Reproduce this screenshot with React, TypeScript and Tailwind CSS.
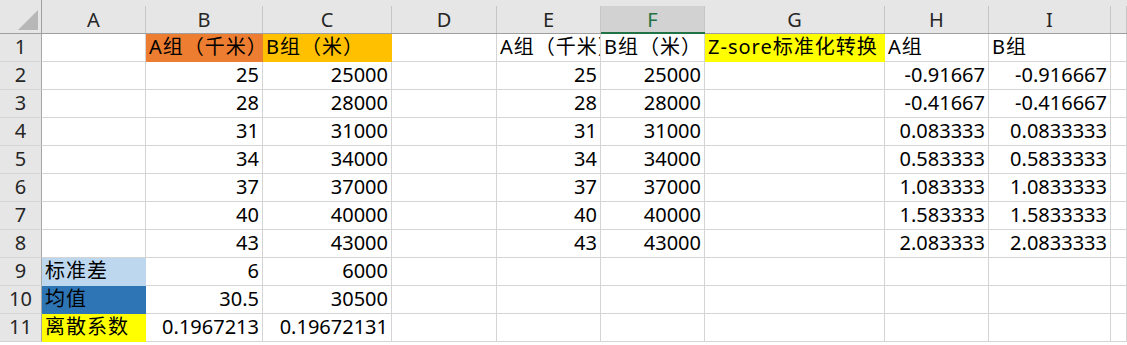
import React from "react";

type Cell = { t?: string; r?: boolean; bg?: string };

const GRID =
  "grid grid-cols-[42px_104px_117px_129px_105px_104px_104px_180px_104px_122px_1fr]";

const letters = ["A", "B", "C", "D", "E", "F", "G", "H", "I", ""];

const L = (t: string, bg?: string): Cell => ({ t, bg });
const N = (t: string): Cell => ({ t, r: true });
const E: Cell = {};

const ORANGE = "bg-[#ed7d31] border-[#ed7d31]";
const GOLD = "bg-[#ffc000] border-[#ffc000]";
const YELLOW = "bg-[#ffff00] border-[#ffff00]";
const LBLUE = "bg-[#bdd7ee] border-[#bdd7ee]";
const BLUE = "bg-[#2e75b6] border-[#2e75b6]";

const aVals = ["25", "28", "31", "34", "37", "40", "43"];
const bVals = ["25000", "28000", "31000", "34000", "37000", "40000", "43000"];
const hVals = ["-0.91667", "-0.41667", "0.083333", "0.583333", "1.083333", "1.583333", "2.083333"];
const iVals = ["-0.916667", "-0.416667", "0.0833333", "0.5833333", "1.0833333", "1.5833333", "2.0833333"];

const rows: Cell[][] = [
  [E, L("A组（千米）", ORANGE), L("B组（米）", GOLD), E, L("A组（千米）"), L("B组（米）"), L("Z-sore标准化转换", YELLOW), L("A组"), L("B组"), E],
  ...aVals.map((a, i) => [E, N(a), N(bVals[i]), E, N(a), N(bVals[i]), E, N(hVals[i]), N(iVals[i]), E]),
  [L("标准差", LBLUE), N("6"), N("6000"), E, E, E, E, E, E, E],
  [L("均值", BLUE), N("30.5"), N("30500"), E, E, E, E, E, E, E],
  [L("离散系数", YELLOW), N("0.1967213"), N("0.19672131"), E, E, E, E, E, E, E],
];

function HeaderCell({ label, selected }: { label: string; selected?: boolean }) {
  return (
    <div className="flex flex-col h-[34px]">
      <div className="h-[6px]" />
      <div
        className={
          selected
            ? "flex flex-1 bg-[#d2d2d2] border-b-2 border-[#217346]"
            : "flex flex-1 border-b border-[#9f9f9f]"
        }
      >
        <div
          className={
            selected
              ? "flex-1 flex items-end justify-center pb-[0px] text-[20px] leading-[24px] text-[#217346]"
              : "flex-1 flex items-end justify-center pb-[1px] text-[20px] leading-[24px] text-[#262626]"
          }
        >
          {label}
        </div>
        <div className="w-px bg-[#c6c6c6]" />
      </div>
    </div>
  );
}

function DataCell({ c }: { c: Cell }) {
  const border = c.bg ? c.bg : "border-[#d4d4d4]";
  return (
    <div
      className={`h-[28px] border-r border-b ${border} overflow-hidden whitespace-nowrap flex items-end pb-[1px] text-[20px] leading-[26px] text-black ${
        c.r ? "justify-end pr-[3px]" : "justify-start pl-[3px] tracking-[1px]"
      }`}
    >
      {c.t}
    </div>
  );
}

export default function App() {
  return (
    <div className="w-[1127px] h-[345px] bg-white overflow-hidden font-['Noto_Sans','Noto_Sans_CJK_SC',sans-serif]">
      <div className={`${GRID} bg-[#e6e6e6]`}>
        <div className="h-[34px] flex items-end justify-end pr-[3px] pb-[3px] border-r border-b border-[#9f9f9f]">
          <svg width="20" height="20" viewBox="0 0 20 20">
            <polygon points="0,20 20,20 20,0" fill="#b7b7b7" />
          </svg>
        </div>
        {letters.map((l, i) => (
          <HeaderCell key={i} label={l} selected={l === "F"} />
        ))}
      </div>
      {rows.map((row, ri) => (
        <div key={ri} className={GRID}>
          <div className="h-[28px] bg-[#e6e6e6] border-r border-[#a6a6a6] border-b border-b-[#d4d4d4] flex items-end justify-center pb-[1px] text-[20px] leading-[26px] text-[#262626]">
            {ri + 1}
          </div>
          {row.map((c, ci) => (
            <DataCell key={ci} c={c} />
          ))}
        </div>
      ))}
    </div>
  );
}
